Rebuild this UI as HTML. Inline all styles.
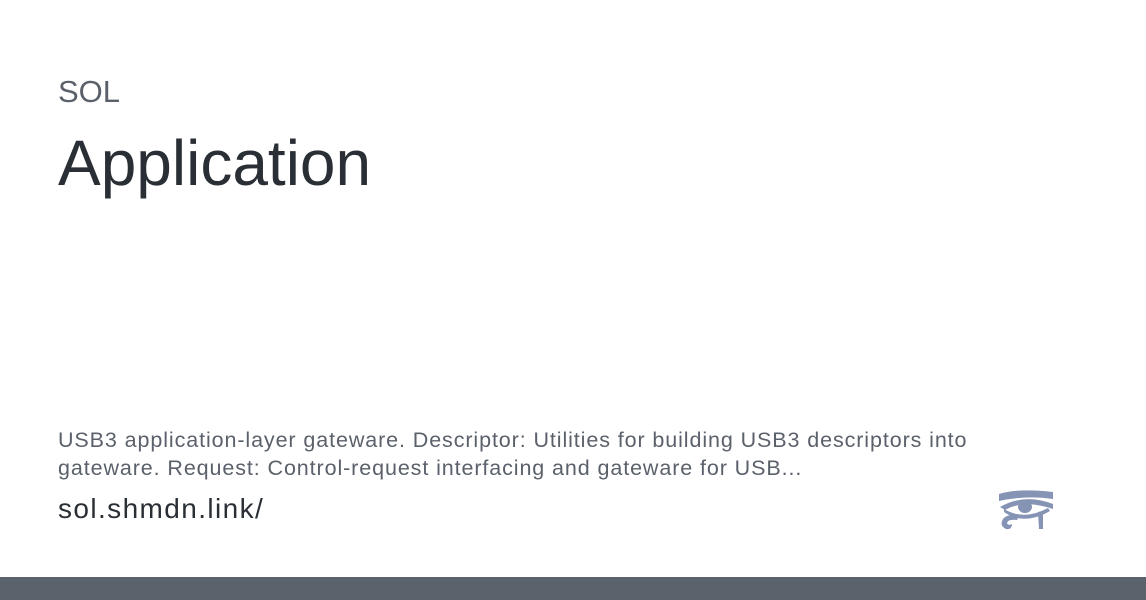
<!DOCTYPE html>
<html><head><style>
body{margin:0;width:1146px;height:600px;background:#fff;position:relative;overflow:hidden;font-family:"Liberation Sans",sans-serif}
.a{position:absolute;left:58px;white-space:nowrap}
</style></head><body>
<div class="a" style="top:74px;font-size:31px;color:#5b616b">SOL</div>
<div class="a" style="top:126px;font-size:64px;color:#2a2f36">Application</div>
<div class="a" style="top:426px;font-size:21.5px;line-height:28px;color:#5b616b;letter-spacing:0.9px">USB3 application-layer gateware. Descriptor: Utilities for building USB3 descriptors into<br>gateware. Request: Control-request interfacing and gateware for USB...</div>
<div class="a" style="top:493px;font-size:28px;color:#2a2f36;letter-spacing:1.4px">sol.shmdn.link/</div>
<svg style="position:absolute;left:996px;top:489px" width="60" height="44" viewBox="0 0 60 44" fill="#8593b5">
<path d="M3 5 Q22 -1 57 3 L57 10 Q30 6 3 12Z"/>
<path d="M4 18 Q28 4 57 15 L57 20 Q28 10 9 21Z"/>
<ellipse cx="29" cy="18" rx="7" ry="6"/>
<path d="M8 20 Q28 32 52 19 L54 22 Q28 37 8 23Z"/>
<path d="M23 27 Q12 24 7 30 Q3 37 10 40 Q16 41 16 35 Q12 37 11 34 Q12 30 21 31Z"/>
<path d="M42 23 L47 22 L47 40 L43 40Z"/>
</svg>
<div style="position:absolute;left:0;top:577px;width:1146px;height:23px;background:#5a626c"></div>
</body></html>
